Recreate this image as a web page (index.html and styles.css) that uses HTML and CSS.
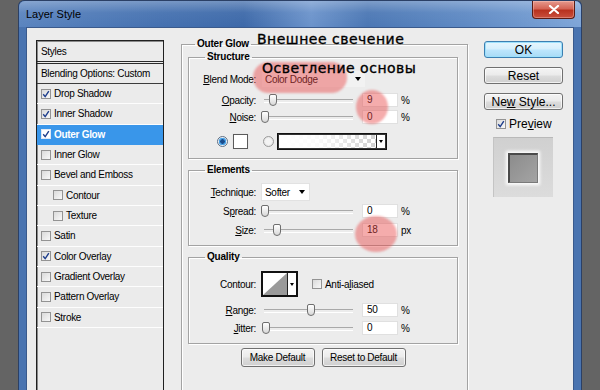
FILE: index.html
```html
<!DOCTYPE html>
<html>
<head>
<meta charset="utf-8">
<link rel="stylesheet" href="styles.css">
</head>
<body>
<div class="window">
  <div class="titlebar">
    <span class="title">Layer Style</span>
    <div class="close"><svg width="12" height="9" viewBox="0 0 12 9"><path d="M2 1 L10 8 M10 1 L2 8" stroke="#fff" stroke-width="2.2" stroke-linecap="round"/></svg></div>
  </div>
  <div class="client">
    <div class="list">
      <div class="item head">Styles</div>
      <div class="item blendopt">Blending Options: Custom</div>
      <div class="item"><span class="cb on"><svg viewBox="0 0 8 8"><path d="M1.2 4.2 L3.2 6.6 L6.8 1.2" /></svg></span>Drop Shadow</div>
      <div class="item"><span class="cb on"><svg viewBox="0 0 8 8"><path d="M1.2 4.2 L3.2 6.6 L6.8 1.2" /></svg></span>Inner Shadow</div>
      <div class="item sel"><span class="cb on"><svg viewBox="0 0 8 8"><path d="M1.2 4.2 L3.2 6.6 L6.8 1.2" /></svg></span>Outer Glow</div>
      <div class="item"><span class="cb"></span>Inner Glow</div>
      <div class="item"><span class="cb"></span>Bevel and Emboss</div>
      <div class="item sub"><span class="cb"></span>Contour</div>
      <div class="item sub"><span class="cb"></span>Texture</div>
      <div class="item"><span class="cb"></span>Satin</div>
      <div class="item"><span class="cb on"><svg viewBox="0 0 8 8"><path d="M1.2 4.2 L3.2 6.6 L6.8 1.2" /></svg></span>Color Overlay</div>
      <div class="item"><span class="cb"></span>Gradient Overlay</div>
      <div class="item"><span class="cb"></span>Pattern Overlay</div>
      <div class="item"><span class="cb"></span>Stroke</div>
    </div>

    <fieldset class="group main">
      <legend>Outer Glow</legend>

      <fieldset class="group structure">
        <legend>Structure</legend>
        <div class="frow r-blend">
          <span class="lbl"><u>B</u>lend Mode:</span>
          <div class="select blendsel"><span>Color Dodge</span><i class="arr"></i></div>
        </div>
        <div class="frow r-num gap5">
          <span class="lbl"><u>O</u>pacity:</span>
          <div class="slider"><i class="thumb" style="left:8px"></i></div>
          <div class="num">9</div><span class="unit">%</span>
        </div>
        <div class="frow r-num gap3">
          <span class="lbl"><u>N</u>oise:</span>
          <div class="slider"><i class="thumb" style="left:0px"></i></div>
          <div class="num">0</div><span class="unit">%</span>
        </div>
        <div class="frow r-color">
          <span class="radio on"></span>
          <span class="swatch"></span>
          <span class="radio"></span>
          <div class="gradbox"><span class="grad"></span><span class="gradarr"><i class="arr"></i></span></div>
        </div>
      </fieldset>

      <fieldset class="group elements">
        <legend>Elements</legend>
        <div class="frow r-blend">
          <span class="lbl"><u>T</u>echnique:</span>
          <div class="select techsel"><span>Softer</span><i class="arr"></i></div>
        </div>
        <div class="frow r-num gap3">
          <span class="lbl">S<u>p</u>read:</span>
          <div class="slider"><i class="thumb" style="left:0px"></i></div>
          <div class="num">0</div><span class="unit">%</span>
        </div>
        <div class="frow r-num gap5">
          <span class="lbl"><u>S</u>ize:</span>
          <div class="slider"><i class="thumb" style="left:12px"></i></div>
          <div class="num">18</div><span class="unit">px</span>
        </div>
      </fieldset>

      <fieldset class="group quality">
        <legend>Quality</legend>
        <div class="frow r-contour">
          <span class="lbl">Contour:</span>
          <div class="contour">
            <span class="curve"><svg viewBox="0 0 26 22" preserveAspectRatio="none"><polygon points="0,22 26,0 26,22" fill="#9a9a9a"/></svg></span>
            <span class="carr"><i class="arr"></i></span>
          </div>
          <span class="cb plain"></span>
          <span class="cbtext">Anti-a<u>l</u>iased</span>
        </div>
        <div class="frow r-num gap6">
          <span class="lbl"><u>R</u>ange:</span>
          <div class="slider"><i class="thumb" style="left:46px"></i></div>
          <div class="num">50</div><span class="unit">%</span>
        </div>
        <div class="frow r-num gap4">
          <span class="lbl"><u>J</u>itter:</span>
          <div class="slider"><i class="thumb" style="left:1px"></i></div>
          <div class="num">0</div><span class="unit">%</span>
        </div>
      </fieldset>

      <div class="defaults">
        <div class="btn small mk"><span>Make Default</span></div>
        <div class="btn small rs"><span>Reset to Default</span></div>
      </div>
    </fieldset>

    <div class="side">
      <div class="btn big ok"><span>OK</span></div>
      <div class="btn big"><span>Reset</span></div>
      <div class="btn big"><span>Ne<u>w</u> Style...</span></div>
      <div class="preview"><span class="cb on"><svg viewBox="0 0 8 8"><path d="M1.2 4.2 L3.2 6.6 L6.8 1.2" /></svg></span><span>Pre<u>v</u>iew</span></div>
      <div class="thumbbox"><div class="inner"></div></div>
    </div>
  </div>
</div>

<div class="hl pill"></div>
<div class="hl circ1"></div>
<div class="hl circ2"></div>
<div class="note n1">Внешнее свечение</div>
<div class="note n2">Осветление основы</div>
</body>
</html>
```
FILE: styles.css
```css
* { box-sizing: border-box; }
html, body { margin: 0; }
body {
  position: relative;
  width: 600px;
  height: 390px;
  overflow: hidden;
  background: #646464;
  font-family: "Liberation Sans", Arial, sans-serif;
  font-size: 10px;
  letter-spacing: -0.3px;
  color: #000;
}
u { text-decoration: underline; text-underline-offset: 1px; }

.window {
  margin-left: 18px;
  width: 564px;
  height: 420px;
  background: #4a74b0;
  border: 1px solid #2b4066;
  border-bottom: 0;
  border-radius: 6px 6px 0 0;
  padding: 0 7px;
  display: flex;
  flex-direction: column;
}
.titlebar {
  flex: none;
  height: 26px;
  margin: 0 -7px;
  padding: 0 6px 0 7px;
  display: flex;
  align-items: flex-start;
  border-radius: 6px 6px 0 0;
  background:
    linear-gradient(rgba(255,255,255,0.28), rgba(255,255,255,0.05) 45%, rgba(255,255,255,0) 100%),
    linear-gradient(to right, #5a84bf 0%, #4571b0 25%, #3d69a9 40%, #6b93cb 52%, #4b77b4 62%, #5f8ac4 80%, #7ea5d8 100%);
}
.title {
  margin-top: 7px;
  font-size: 11px;
  letter-spacing: 0;
  color: #000;
}
.close {
  margin-left: auto;
  width: 43px;
  height: 18px;
  border: 1px solid #5b1b14;
  border-top: 0;
  border-radius: 0 0 4px 4px;
  background: linear-gradient(#e69a8e, #d46455 45%, #b8321f 55%, #c9503e 100%);
  box-shadow: inset 0 0 0 1px rgba(255,220,210,0.35);
  display: flex;
  align-items: center;
  justify-content: center;
}
.close svg { width: 12px; height: 9px; }

.client {
  flex: 1;
  min-height: 0;
  background: #ececec;
  border: 1px solid #3a5a8c;
  border-bottom: 0;
  display: flex;
  align-items: flex-start;
  padding: 10px 0 0 9px;
}

/* styles list */
.list {
  width: 128px;
  height: 400px;
  margin-top: 2px;
  border: 1px solid #202020;
  box-shadow: inset 1px 1px 0 #8a8a8a;
  background: #ebebeb;
}
.item {
  height: 20.33px;
  display: flex;
  align-items: center;
  padding-left: 4px;
  border-bottom: 1px solid #fdfdfd;
  gap: 3px;
  white-space: nowrap;
}
.item.head { height: 23px; border-bottom: 3px double #2a2a2a; }
.item.blendopt { height: 20px; border-bottom: 1px solid #3c3c3c; }
.item.sub { padding-left: 16px; }
.item.sel { background: #3996ea; color: #fff; font-weight: bold; border-bottom-color: #3996ea; }

.cb {
  width: 10px;
  height: 10px;
  flex: none;
  border: 1px solid #939393;
  background: linear-gradient(135deg, #dadada, #f8f8f8);
  display: flex;
}
.cb svg { width: 8px; height: 8px; }
.cb svg path { fill: none; stroke: #1d3d8c; stroke-width: 1.4; }
.sel .cb { background: #fff; border-color: #dfe8f5; }

/* group boxes */
.group {
  margin: 0;
  border: 1px solid #a3a3a3;
  box-shadow: inset 1px 1px 0 #fff, 1px 1px 0 #fff;
  min-width: 0;
}
.group legend {
  padding: 0 2px;
  font-weight: bold;
  line-height: 12px;
  letter-spacing: -0.2px;
}
.main {
  width: 287px;
  height: 400px;
  margin-left: 17px;
  padding: 1px 9px 0 6px;
}
.main > legend { margin-left: 7px; }
.structure, .elements, .quality { padding: 7px 0 0 0; }
.structure > legend, .elements > legend, .quality > legend { margin-left: 16px; }
.structure { height: 108px; }
.elements { height: 82px; margin-top: 5px; }
.quality { height: 93px; margin-top: 5px; padding-top: 8px; }

.frow { display: flex; align-items: center; white-space: nowrap; }
.lbl { width: 67px; text-align: right; flex: none; }
.r-blend { height: 18px; }
.r-num { height: 14px; }
.gap3 { margin-top: 3px; }
.gap4 { margin-top: 4px; }
.gap5 { margin-top: 5px; }
.gap6 { margin-top: 6px; }

.select {
  margin-left: 5px;
  height: 18px;
  display: flex;
  align-items: center;
  padding-left: 3px;
  background: #fafafa;
  border: 1px solid #e2e2e2;
}
.blendsel { width: 105px; background: #f2f2f2; border-color: #ececec; }
.techsel { width: 49px; background: #fff; }
.select span { flex: 1; }
.arr {
  display: block;
  width: 0; height: 0;
  border-left: 3.5px solid transparent;
  border-right: 3.5px solid transparent;
  border-top: 4px solid #000;
  margin-right: 4px;
}

.slider {
  position: relative;
  margin-left: 5px;
  width: 92px;
  height: 12px;
  flex: none;
}
.slider::before {
  content: "";
  position: absolute;
  left: 3px; right: 0; top: 5px;
  height: 2px;
  border-top: 1px solid #a9a9a9;
  border-bottom: 1px solid #fff;
}
.thumb {
  position: absolute;
  top: 0;
  width: 8px;
  height: 12px;
  border: 1px solid #6e6e6e;
  border-radius: 2px 2px 4px 4px;
  background: linear-gradient(#ffffff, #d8d8d8);
}
.num {
  margin-left: 9px;
  width: 36px;
  height: 14px;
  line-height: 12px;
  padding-left: 4px;
  background: #fff;
  border: 1px solid #e0e0e0;
  flex: none;
}
.unit { margin-left: 3px; }

.r-color { height: 17px; margin-top: 9px; }
.radio {
  width: 11px; height: 11px;
  border-radius: 50%;
  border: 1px solid #9a9a9a;
  background: radial-gradient(circle, #f4f4f4 40%, #d9d9d9 100%);
  flex: none;
  margin-left: 15px;
}
.radio.on {
  margin-left: 28px;
  border-color: #5e6f84;
  background: radial-gradient(circle, #1a4c8c 0 2px, #4aa3e8 2.5px 3.5px, #e8eef4 4px);
}
.swatch {
  margin-left: 5px;
  width: 15px; height: 15px;
  background: #fff;
  border: 1px solid #5a5a5a;
  box-shadow: 0 0 0 1px #e8e8e8;
  flex: none;
}
.gradbox {
  margin-left: 3px;
  width: 110px;
  height: 17px;
  border: 1px solid #111;
  box-shadow: inset 0 0 0 1px #333;
  display: flex;
}
.grad {
  flex: 1;
  margin: 1px 0 1px 1px;
  background:
    linear-gradient(to right, #fff 0%, rgba(255,255,255,0.9) 40%, rgba(255,255,255,0) 100%),
    repeating-conic-gradient(#d0d0d0 0 25%, #fff 0 50%) 0 0 / 8px 8px;
}
.gradarr {
  width: 9px;
  margin: 1px 1px 1px 0;
  border-left: 1px solid #222;
  background: #fff;
  display: flex;
  align-items: center;
  justify-content: center;
}
.gradarr .arr { margin: 0; border-left-width: 2.5px; border-right-width: 2.5px; border-top-width: 3px; }

.r-contour { height: 26px; }
.contour {
  margin-left: 5px;
  width: 37px;
  height: 26px;
  border: 2px solid #111;
  display: flex;
  background: #fff;
  flex: none;
}
.curve { flex: 1; display: flex; }
.curve svg { width: 100%; height: 100%; }
.carr {
  width: 9px;
  border-left: 1px solid #222;
  display: flex;
  align-items: center;
  justify-content: center;
}
.carr .arr { margin: 0; border-left-width: 2.5px; border-right-width: 2.5px; border-top-width: 3px; }
.cb.plain { margin-left: 14px; }
.cbtext { margin-left: 3px; }

.defaults {
  margin-top: 4px;
  display: flex;
  justify-content: center;
  gap: 7px;
}
.btn {
  height: 19px;
  border: 1px solid #707070;
  border-radius: 3px;
  background: linear-gradient(#f4f4f4, #ebebeb 48%, #dddddd 52%, #cfcfcf);
  box-shadow: inset 0 0 0 1px rgba(255,255,255,0.7);
  display: flex;
  align-items: center;
  justify-content: center;
  white-space: nowrap;
}
.mk { width: 74px; }
.rs { width: 84px; }

.side {
  width: 79px;
  margin-left: 16px;
  margin-top: 3px;
  display: flex;
  flex-direction: column;
}
.btn.big {
  height: 17px;
  font-size: 12px;
  letter-spacing: 0;
  margin-bottom: 9px;
}
.btn.ok {
  border-color: #3c7fb1;
  background: linear-gradient(#e8f6fd, #d6effc 48%, #bde6fd 52%, #a8dbf6);
  box-shadow: inset 0 0 0 1px #9de0fb;
}
.preview {
  margin-top: -1px;
  display: flex;
  align-items: center;
  gap: 3px;
  padding-left: 12px;
  font-size: 12px;
  letter-spacing: 0;
  height: 11px;
}
.thumbbox {
  margin: 8px 0 0 9px;
  width: 60px;
  height: 60px;
  background: linear-gradient(#d0d0d0, #dcdcdc);
  border-top: 1px solid #b9b9b9;
  border-left: 1px solid #c4c4c4;
  padding: 15px 0 0 14px;
}
.inner {
  width: 30px;
  height: 30px;
  background: linear-gradient(135deg, #8c8c8c, #a4a4a4);
  border-top: 2px solid #4a4a4a;
  border-left: 2px solid #4a4a4a;
  border-right: 1px solid #7a7a7a;
  border-bottom: 1px solid #7a7a7a;
  box-shadow: 0 0 3px 2px #fdfdfd;
}

/* highlights and annotations */
.hl {
  position: absolute;
  background: rgba(232, 72, 72, 0.45);
  filter: blur(1px);
}
.pill { left: 253px; top: 62px; width: 94px; height: 31px; border-radius: 16px; }
.circ1 { left: 356px; top: 90px; width: 32px; height: 34px; border-radius: 50%; }
.circ2 { left: 355px; top: 216px; width: 42px; height: 36px; border-radius: 50%; }
.note {
  position: absolute;
  font-family: "DejaVu Sans", sans-serif;
  font-size: 14px;
  line-height: 16px;
  letter-spacing: 0.5px;
  -webkit-text-stroke: 0.35px #000;
  color: #000;
  white-space: nowrap;
}
.n1 { left: 257px; top: 31px; }
.n2 { left: 262px; top: 60px; }
```
